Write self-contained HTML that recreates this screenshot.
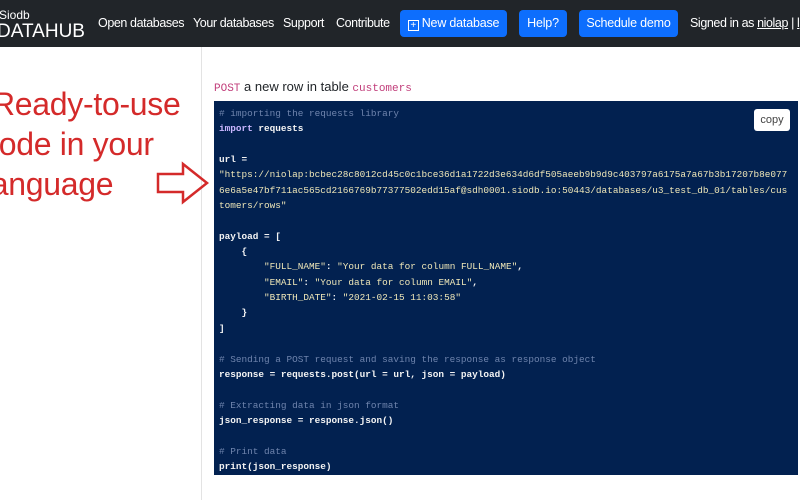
<!DOCTYPE html>
<html><head><meta charset="utf-8"><style>
*{margin:0;padding:0;box-sizing:border-box}
body{width:800px;height:500px;overflow:hidden;background:#fff;font-family:"Liberation Sans",sans-serif;position:relative}
.nav{position:absolute;left:0;top:0;width:800px;height:47px;background:#212529;color:#fff}
.nav .a{position:absolute;top:16px;font-size:12.5px;letter-spacing:-0.4px;white-space:nowrap}
.btn{position:absolute;top:10px;height:27px;background:#0d6efd;border-radius:4px;color:#fff;font-size:12.5px;letter-spacing:-0.2px;line-height:27px;text-align:center;white-space:nowrap}
.div{position:absolute;left:201px;top:47px;width:1px;height:453px;background:#e3e3e3}
.red{position:absolute;color:#d42a2a;font-size:32px;white-space:nowrap;line-height:40px;letter-spacing:-0.3px}
.code{position:absolute;left:214px;top:101px;width:584px;height:374px;background:#022150}
pre{position:absolute;left:5px;top:5px;font-family:"Liberation Mono",monospace;font-size:9.4px;line-height:15.35px;color:#f4f4f4;font-weight:bold}
.c{color:#6f84ad;font-weight:normal}.k{color:#c9b6ff}.s{color:#efe7b8;font-weight:normal}
</style></head><body>
<div class="nav">
<div style="position:absolute;left:-1px;top:9px;font-size:12px;line-height:12px">Siodb</div>
<div style="position:absolute;left:-3px;top:21px;font-size:19px;line-height:22px">DATAHUB</div>
<div class="a" style="left:98px">Open databases</div>
<div class="a" style="left:193px">Your databases</div>
<div class="a" style="left:283px">Support</div>
<div class="a" style="left:336px">Contribute</div>
<div class="btn" style="left:400px;width:107px"><span style="display:inline-block;width:11px;height:11px;border:1px solid #fff;font-size:10px;line-height:9px;vertical-align:-1px;margin-right:3px">+</span>New database</div>
<div class="btn" style="left:519px;width:48px">Help?</div>
<div class="btn" style="left:579px;width:99px">Schedule demo</div>
<div class="a" style="left:690px">Signed in as <u>niolap</u> | <u>l</u></div>
</div>
<div class="div"></div>
<div class="red" style="left:-8px;top:84px">Ready-to-use</div>
<div class="red" style="left:-17px;top:124px">code in your</div>
<div class="red" style="left:-16px;top:164px">language</div>
<svg style="position:absolute;left:155px;top:161px" width="56" height="44"><path d="M3 13 H28 V3 L52 22 L28 41 V31 H3 Z" fill="none" stroke="#d42a2a" stroke-width="2.5" stroke-linejoin="miter"/></svg>
<div style="position:absolute;left:214px;top:79px;font-size:13px;color:#212529"><span style="font-family:'Liberation Mono',monospace;font-size:11px;color:#c13d7a">POST</span> a new row in table <span style="font-family:'Liberation Mono',monospace;font-size:11px;color:#c13d7a">customers</span></div>
<div class="code">
<div style="position:absolute;right:8px;top:8px;width:36px;height:22px;background:#fff;border-radius:3px;color:#444;font-size:11px;line-height:22px;text-align:center">copy</div>
<pre><span class="c"># importing the requests library</span>
<span class="k">import</span> requests

url =
<span class="s">"https://niolap:bcbec28c8012cd45c0c1bce36d1a1722d3e634d6df505aeeb9b9d9c403797a6175a7a67b3b17207b8e077
6e6a5e47bf711ac565cd2166769b77377502edd15af@sdh0001.siodb.io:50443/databases/u3_test_db_01/tables/cus
tomers/rows"</span>

payload = [
    {
        <span class="s">"FULL_NAME"</span>: <span class="s">"Your data for column FULL_NAME"</span>,
        <span class="s">"EMAIL"</span>: <span class="s">"Your data for column EMAIL"</span>,
        <span class="s">"BIRTH_DATE"</span>: <span class="s">"2021-02-15 11:03:58"</span>
    }
]

<span class="c"># Sending a POST request and saving the response as response object</span>
response = requests.post(url = url, json = payload)

<span class="c"># Extracting data in json format</span>
json_response = response.json()

<span class="c"># Print data</span>
print(json_response)</pre>
</div>
</body></html>
